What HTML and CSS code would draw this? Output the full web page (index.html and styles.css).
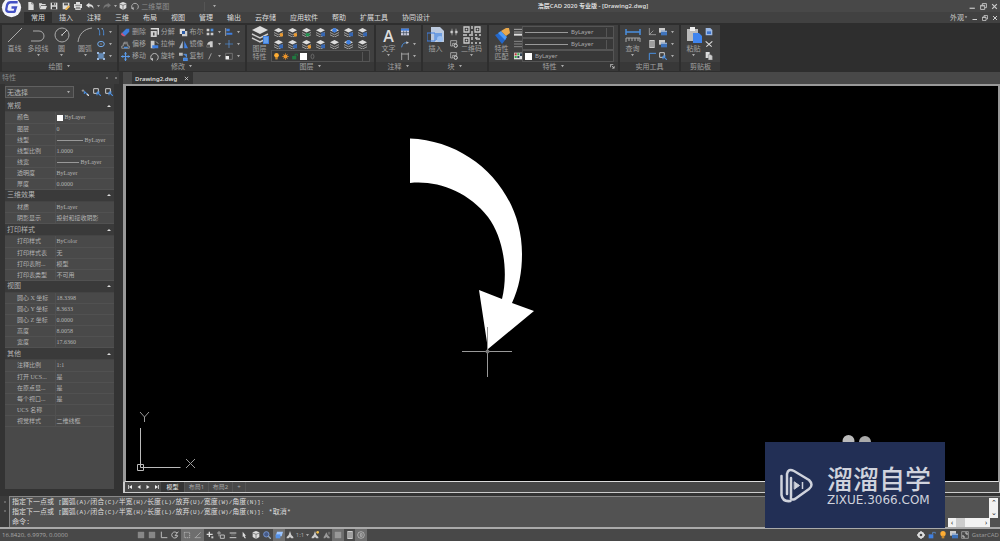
FILE: index.html
```html
<!DOCTYPE html>
<html lang="zh-CN">
<head>
<meta charset="utf-8">
<title>浩辰CAD 2020 专业版 - [Drawing2.dwg]</title>
<link rel="stylesheet" href="styles.css">
</head>
<body>
<svg class="sprite" aria-hidden="true">
  <symbol id="new" viewBox="0 0 12 12"><path d="M2 0h5l3 3v9H2z" fill="#ddd"/><path d="M7 0v3h3" fill="none" stroke="#666"/></symbol>
  <symbol id="open" viewBox="0 0 12 12"><path d="M0 2h4l1 1h5v2H3l-2 5z" fill="#ddd"/><path d="M3 6h9l-2 5H1z" fill="#ddd"/></symbol>
  <symbol id="save" viewBox="0 0 12 12"><path d="M1 1h10v10H1z" fill="#ddd"/><path d="M3 1h6v4H3zM3 7h6v4H3z" fill="#474747"/><path d="M6 2h2v2H6z" fill="#ddd"/></symbol>
  <symbol id="saveas" viewBox="0 0 12 12"><path d="M1 1h10v6L7 11H1z" fill="#ddd"/><path d="M3 2h6v3H3z" fill="#555"/><path d="M10 5l2 2-5 5H5v-2z" fill="#f0b64e"/></symbol>
  <symbol id="print" viewBox="0 0 12 12"><path d="M3 0h6v3h3v6h-2v3H2V9H0V3h3z" fill="#ddd"/><path d="M2 5h8M3 8h6M3 10h6" stroke="#555"/></symbol>
  <symbol id="undo" viewBox="0 0 12 12"><path d="M5 1L0 5l5 4V6.500c3 0 5 1 6 4 1-4-2-7-6-7z" fill="#ddd"/></symbol>
  <symbol id="redo" viewBox="0 0 12 12"><path d="M7 1l5 4-5 4V6.500c-3 0-5 1-6 4-1-4 2-7 6-7z" fill="#777"/></symbol>
  <symbol id="cube" viewBox="0 0 12 12"><path d="M6 0l5 2v7l-5 3-5-3V2z" fill="#ddd"/><path d="M1 3l5 2 5-2M6 5v7" fill="none" stroke="#555"/></symbol>
  <symbol id="orbit" viewBox="0 0 12 12"><path d="M3 11A5 5 0 1 1 9 11" fill="none" stroke="#bbb" stroke-width="1.300"/><path d="M0 9l4 3 0-4z" fill="#bbb"/></symbol>
  <symbol id="down" viewBox="0 0 6 4"><path d="M1 0h4L3 3z" fill="#aaa"/></symbol>
  <symbol id="min" viewBox="0 0 12 12"><path d="M1 9h9" stroke="#ccc" stroke-width="2"/></symbol>
  <symbol id="restore" viewBox="0 0 12 12"><path d="M1 4h7v7H1zM4 4V1h7v7H8M1 5h7" fill="none" stroke="#ccc" stroke-width="1.500"/></symbol>
  <symbol id="close" viewBox="0 0 12 12"><path d="M2 2l8 8M10 2l-8 8" stroke="#ccc" stroke-width="2"/></symbol>

  <symbol id="line" viewBox="0 0 16 16"><path d="M1 15L15 1" stroke="#aaa"/></symbol>
  <symbol id="pline" viewBox="0 0 16 16"><path d="M1 14h8a5 5 0 0 0 0-10H3" fill="none" stroke="#aaa"/></symbol>
  <symbol id="circle" viewBox="0 0 16 16"><circle cx="8" cy="8" r="7" fill="none" stroke="#aaa"/><path d="M8 8l5-5M7 8h2" stroke="#ccc"/></symbol>
  <symbol id="arc" viewBox="0 0 16 16"><path d="M1 15C2 7 7 2 15 1" fill="none" stroke="#aaa"/></symbol>
  <symbol id="spline" viewBox="0 0 12 12"><path d="M1 1c3 1 3 3 3 10M7 1c3 1 3 3 3 10" fill="none" stroke="#4a8ede" stroke-width="1.500"/><path d="M1 1h2M7 1h2" stroke="#ccc"/></symbol>
  <symbol id="ellipse" viewBox="0 0 12 12"><ellipse cx="6" cy="6" rx="5" ry="4" fill="none" stroke="#6fa8e8" stroke-width="1.500"/><path d="M5 6h2" stroke="#ddd"/></symbol>
  <symbol id="hatch" viewBox="0 0 12 12"><path d="M1 1h10v10H1z" fill="#567"/><path d="M3 3h6v6H3zM3 6h6M6 3v6" fill="none" stroke="#6fa8e8"/><path d="M0 0h3v3H0zM9 0h3v3H9zM0 9h3v3H0zM9 9h3v3H9z" fill="#9bb8dc"/></symbol>

  <symbol id="erase" viewBox="0 0 12 12"><path d="M7 1h4v4L5 11 1 7z" fill="#3f7fe0"/><path d="M1 6l5 5H3L0 9z" fill="#d25476"/></symbol>
  <symbol id="offset" viewBox="0 0 12 12"><path d="M1 11V8h2V5h6v3h2v3zM4 5V3h5" fill="none" stroke="#aaa"/><path d="M4 10h5" stroke="#4a8ede" stroke-width="2"/></symbol>
  <symbol id="move" viewBox="0 0 12 12"><path d="M6 0v12M0 6h12" stroke="#5b9bea" stroke-width="1.500"/><path d="M6 0l2 3H4zM6 12l2-3H4zM0 6l3-2v4zM12 6L9 4v4z" fill="#5b9bea"/></symbol>
  <symbol id="explode" viewBox="0 0 12 12"><path d="M1 4h8v8H1z" fill="#ccc"/><path d="M4 6h2v4H4z" fill="#444"/><path d="M1 1h10v8" fill="none" stroke="#ddd" stroke-width="2"/></symbol>
  <symbol id="stretch" viewBox="0 0 12 12"><path d="M1 1h5v10H1z" fill="#ccc"/><path d="M3 7h8v4H3z" fill="#3f7fe0"/><path d="M8 2l3 3" stroke="#ccc"/></symbol>
  <symbol id="bool" viewBox="0 0 12 12"><path d="M1 1h7v7H1z" fill="#ddd"/><path d="M4 4h7v7H4z" fill="#ccc"/><path d="M4 4h4v4H4z" fill="#2d5da8"/></symbol>
  <symbol id="mirror" viewBox="0 0 12 12"><path d="M5 1v10H0z" fill="#aeb9c7"/><path d="M7 1v10h5z" fill="#3f7fe0"/></symbol>
  <symbol id="copy2" viewBox="0 0 12 12"><path d="M0 1h5v4H0z" fill="#bbb"/><path d="M6 3h4v4M6 8h5v4H6z" fill="#3f7fe0" stroke="#5b9bea"/></symbol>
  <symbol id="array" viewBox="0 0 12 12"><path d="M1 1h4v4H1zM7 7h4v4H7zM1 7h4v4H1z" fill="#ccc"/><path d="M7 1h4v4H7z" fill="#4a8ede"/></symbol>
  <symbol id="fillet" viewBox="0 0 12 12"><path d="M1 11C1 5 4 2 8 2h2v9z" fill="#ccc"/><path d="M1 7h5v4H1z" fill="#555"/></symbol>
  <symbol id="slash" viewBox="0 0 12 12"><path d="M4 11l4-9" stroke="#ccc"/></symbol>
  <symbol id="align" viewBox="0 0 12 12"><path d="M1 0v12" stroke="#ccc"/><path d="M2 1h5v4H2zM2 7h9v3H2z" fill="#3f7fe0"/></symbol>
  <symbol id="trim" viewBox="0 0 12 12"><path d="M0 6h12" stroke="#4a8ede"/><path d="M6 0v12" stroke="#5b9bea"/></symbol>
  <symbol id="scale" viewBox="0 0 12 12"><path d="M1 2h10v9H1z" fill="none" stroke="#888"/><path d="M1 6h5v5H1z" fill="#eee"/></symbol>

  <symbol id="layers" viewBox="0 0 18 18"><path d="M9 0l8 4-8 4-8-4z" fill="#ddd"/><path d="M1 8l8 4 8-4M1 12l8 4 8-4" fill="none" stroke="#ccc" stroke-width="1.500"/><path d="M12 10h6v8h-6z" fill="#3f7fe0"/><path d="M13 12h4M13 14h4M13 16h4" stroke="#adf" stroke-width=".7"/></symbol>
  <symbol id="lay" viewBox="0 0 12 12"><path d="M6 0l6 3-6 3-6-3z" fill="#ddd"/><path d="M0 6l6 3 6-3M0 9l6 3 6-3" fill="none" stroke="#bbb"/></symbol>
  <symbol id="lay-o" viewBox="0 0 12 12"><use href="#lay"/><circle cx="10" cy="9" r="2.500" fill="#e99a32"/></symbol>
  <symbol id="lay-g" viewBox="0 0 12 12"><use href="#lay"/><path d="M5 7h5v4H5z" fill="#249653"/></symbol>
  <symbol id="lay-b" viewBox="0 0 12 12"><use href="#lay"/><path d="M7 6h5v5H7z" fill="#3567b5"/></symbol>
  <symbol id="lay-t" viewBox="0 0 12 12"><use href="#lay"/><circle cx="6" cy="3" r="3" fill="#3f7fe0"/></symbol>
  <symbol id="bulb" viewBox="0 0 12 12"><circle cx="6" cy="4" r="4" fill="#ffad33"/><path d="M4 7h4v4H4z" fill="#c9892f"/></symbol>
  <symbol id="sun" viewBox="0 0 12 12"><circle cx="6" cy="6" r="3.500" fill="#ffa52e"/><path d="M6 0v12M0 6h12M2 2l8 8M10 2l-8 8" stroke="#e08a28"/></symbol>
  <symbol id="lock" viewBox="0 0 12 12"><path d="M2 5h7v6H2z" fill="#207a40"/><path d="M7 5V2h4v3" fill="none" stroke="#207a40" stroke-width="1.500"/></symbol>
  <symbol id="swatch" viewBox="0 0 12 12"><path d="M0 0h12v12H0z" fill="#fff"/></symbol>
  <symbol id="zero" viewBox="0 0 12 12"><ellipse cx="6" cy="6" rx="2.500" ry="4" fill="none" stroke="#888"/></symbol>

  <symbol id="tbl" viewBox="0 0 12 12"><path d="M0 1h12v10H0z" fill="#ccd"/><path d="M0 1h12v3H0z" fill="#3f7fe0"/><path d="M0 7h12M4 4v7M8 4v7" stroke="#345"/></symbol>
  <symbol id="leader" viewBox="0 0 12 12"><path d="M1 11c1-6 4-7 8-7" fill="none" stroke="#4a8ede" stroke-width="1.500"/><path d="M8 2l4 2-4 2z" fill="#ccc"/></symbol>
  <symbol id="dim" viewBox="0 0 12 12"><path d="M1 1v11M11 1v11M1 3h10" fill="none" stroke="#bbb" stroke-width="1.200"/></symbol>
  <symbol id="insert" viewBox="0 0 18 18"><path d="M4 1h9l4 4v11H4z" fill="#bccadf"/><path d="M0 7h8v8H0z" fill="none" stroke="#3f7fe0"/><path d="M8 7h7v7H8z" fill="#6f9fe2"/><circle cx="13" cy="13" r="3" fill="#9cc1f3"/></symbol>
  <symbol id="qr" viewBox="0 0 18 18"><path d="M1 1h5v5H1zM12 1h5v5h-5zM1 12h5v5H1z" fill="none" stroke="#ccc" stroke-width="1.300"/><path d="M3 3h1v1H3zM14 3h1v1h-1zM3 14h1v1H3z" fill="#ccc" stroke="#ccc" stroke-width=".6"/><path d="M9 0v3M9 5v3M0 9h4M6 9h4M12 9h2M16 9h2M9 11v3M12 12h2v2M16 12v2M9 16v2M12 17h2M16 17h2" fill="none" stroke="#ccc" stroke-width="1.400"/></symbol>
  <symbol id="blk" viewBox="0 0 12 12"><path d="M3 1v10M9 1v10M0 6h5M7 6h5" stroke="#bbb"/><path d="M1 4h3v4H1zM8 4h3v4H8z" fill="#ccc"/></symbol>
  <symbol id="blk2" viewBox="0 0 12 12"><path d="M1 1h9v4H4v4H1z" fill="none" stroke="#bbb" stroke-width="1.200"/><circle cx="8.500" cy="8.500" r="2.500" fill="none" stroke="#ddd" stroke-width="1.500"/></symbol>
  <symbol id="brush" viewBox="0 0 18 18"><path d="M2 9l4-2 7 6-4 5z" fill="#2467c9"/><path d="M5 7l3-2 6 6-2 3z" fill="#4c99f5"/><path d="M8 5l5-3 3 0 1 5-4 3z" fill="#e9a84c"/></symbol>
  <symbol id="thick" viewBox="0 0 12 12"><path d="M0 2h12M0 6h12" stroke="#ddd"/><path d="M0 10h12" stroke="#ddd" stroke-width="3"/></symbol>
  <symbol id="thin" viewBox="0 0 12 12"><path d="M0 2h12M0 6h12M0 10h12" stroke="#aaa"/></symbol>
  <symbol id="colors" viewBox="0 0 12 12"><path d="M0 1h12v10H0z" fill="#ddd"/><path d="M1 2h3v3H1z" fill="#b33"/><path d="M5 2h3v3H5zM1 6h3v3H1z" fill="#3a4"/><path d="M9 2h3v4H9zM5 6h3v3H5z" fill="#345"/></symbol>
  <symbol id="measure" viewBox="0 0 18 18"><path d="M2 3v6M16 3v6M2 6h14" stroke="#4a8ede" stroke-width="1.500"/><path d="M2 16v-4h14v4M5 12v3M8 12v3M11 12v3M14 12v3" fill="none" stroke="#aaa"/></symbol>
  <symbol id="ucs" viewBox="0 0 12 12"><path d="M2 0v10h10M2 10l6-6" fill="none" stroke="#bbb"/></symbol>
  <symbol id="calc" viewBox="0 0 12 12"><path d="M2 0h8v12H2z" fill="#ccc"/><path d="M3 3h6M3 6h6M3 9h6" stroke="#444"/></symbol>
  <symbol id="corner" viewBox="0 0 12 12"><path d="M2 12V2h10" fill="none" stroke="#4a8ede" stroke-width="1.500"/></symbol>
  <symbol id="win" viewBox="0 0 12 12"><path d="M0 0h9v7H0z" fill="#ccc"/><path d="M3 4h9v7H3z" fill="#3f74bd"/><path d="M3 5h9" stroke="#ddd"/></symbol>
  <symbol id="pick" viewBox="0 0 12 12"><path d="M1 1h7v7H1z" fill="none" stroke="#ccc" stroke-width="1.500"/><path d="M6 6l6 6M6 6v5M6 6h4" fill="none" stroke="#4a8ede" stroke-width="1.600"/></symbol>
  <symbol id="qpick" viewBox="0 0 12 12"><path d="M1 4h4M3 2v4" stroke="#bbb"/><path d="M5 5l5 5M5 5v4" fill="none" stroke="#4a8ede" stroke-width="1.600"/><path d="M9 9l3 3" stroke="#ddd" stroke-width="2"/></symbol>
  <symbol id="paste" viewBox="0 0 18 18"><path d="M2 3h11v12H2z" fill="#bbb"/><path d="M5 1h5v4H5z" fill="#eee"/><path d="M8 7h6l3 3v7H8z" fill="#3f84ee"/></symbol>
  <symbol id="cut" viewBox="0 0 12 12"><path d="M1 2l9 8M11 2l-9 8" stroke="#ddd" stroke-width="1.600"/></symbol>
  <symbol id="copy" viewBox="0 0 12 12"><path d="M1 0h6v9H1z" fill="#ddd"/><path d="M5 4h4l2 2v6H5z" fill="#ccc" stroke="#777" stroke-width=".7"/></symbol>
  <symbol id="pagelink" viewBox="0 0 12 12"><path d="M1 0h7l3 3v8H1z" fill="#9db9e4"/><path d="M3 5h6v4H3z" fill="#3f74cc"/></symbol>
  <symbol id="launch" viewBox="0 0 12 12"><path d="M1 8V1h7M4 4l6 6M10 5v5H5" fill="none" stroke="#ccc" stroke-width="1.800"/></symbol>

  <symbol id="grid" viewBox="0 0 12 12"><path d="M1 3h10M1 6h10M1 9h10M3 1v10M6 1v10M9 1v10" stroke="#bbb"/></symbol>
  <symbol id="ortho" viewBox="0 0 12 12"><path d="M2 1v9h9" fill="none" stroke="#bbb" stroke-width="1.500"/></symbol>
  <symbol id="polar" viewBox="0 0 12 12"><path d="M9 3A4.500 4.500 0 1 0 10 7H6l5-6" fill="none" stroke="#ccc" stroke-width="1.300"/></symbol>
  <symbol id="osnap" viewBox="0 0 12 12"><path d="M2 2h8v8H2z" fill="none" stroke="#ccc" stroke-dasharray="2 1"/></symbol>
  <symbol id="otrack" viewBox="0 0 12 12"><path d="M2 10L10 2M1 10h9" fill="none" stroke="#bbb"/></symbol>
  <symbol id="plus" viewBox="0 0 12 12"><path d="M5 1v8M1 5h9" stroke="#ddd" stroke-width="2"/><path d="M8 8h3v3H8z" fill="#ccc"/></symbol>
  <symbol id="dyn" viewBox="0 0 12 12"><path d="M3 0v8M0 3h6" stroke="#ccc"/><path d="M5 6h6v5H5z" fill="none" stroke="#bbb" stroke-width="1.500"/></symbol>
  <symbol id="lwt" viewBox="0 0 12 12"><path d="M1 3h10M1 10h10" stroke="#ccc" stroke-width="1.500"/><path d="M3 6h7" stroke="#888"/></symbol>
  <symbol id="cursor" viewBox="0 0 12 12"><path d="M4 1l5 6H7l2 4H7L5 8 4 9z" fill="#ddd"/></symbol>
  <symbol id="lens" viewBox="0 0 12 12"><circle cx="5" cy="5" r="4" fill="#465a87" stroke="#7595cf" stroke-width="1.500"/><path d="M8 8l4 4" stroke="#9ab" stroke-width="2"/></symbol>
  <symbol id="blue" viewBox="0 0 12 12"><path d="M3 1h9l-2 7H1z" fill="#9cc5ff"/><path d="M1 5h7v6H1z" fill="#5592e8"/></symbol>
  <symbol id="ann" viewBox="0 0 12 12"><path d="M6 0l2 6 3 3v2H8L6 9l-2 2H1V9l3-3z" fill="#ccc"/></symbol>
  <symbol id="annstar" viewBox="0 0 12 12"><use href="#ann"/><circle cx="10" cy="2" r="2" fill="#f3c04d"/></symbol>
  <symbol id="annoff" viewBox="0 0 12 12"><path d="M5 2l2 4 3 3v2H7L5 9l-2 2H1V9l2-3z" fill="#999"/><path d="M9 1v5M7 3h4" stroke="#888"/></symbol>
  <symbol id="gear" viewBox="0 0 12 12"><circle cx="6" cy="6" r="3.500" fill="none" stroke="#ddd" stroke-width="3"/><path d="M6 0v3M6 9v3M0 6h3M9 6h3" stroke="#ddd" stroke-width="2"/></symbol>
  <symbol id="unlock" viewBox="0 0 12 12"><path d="M1 5h7v6H1z" fill="#3f7fe0"/><path d="M7 5V2h4v2" fill="none" stroke="#5582bd" stroke-width="1.500"/></symbol>
  <symbol id="full" viewBox="0 0 12 12"><path d="M1 1h10v10H1z" fill="none" stroke="#bbb"/><path d="M3 6v3h3M9 6V3H6" fill="none" stroke="#ccc" stroke-width="1.500"/></symbol>
  <symbol id="round" viewBox="0 0 12 12"><circle cx="6" cy="6" r="5" fill="none" stroke="#ccc"/><path d="M8 4H5v4h3M6 6h3" fill="none" stroke="#ccc"/></symbol>
  <symbol id="first" viewBox="0 0 12 12"><path d="M10 2v8L4 6z" fill="#eee"/><path d="M3 2v8" stroke="#eee" stroke-width="1.500"/></symbol>
  <symbol id="prev" viewBox="0 0 12 12"><path d="M9 2v8L3 6z" fill="#eee"/></symbol>
  <symbol id="next" viewBox="0 0 12 12"><path d="M3 2v8l6-4z" fill="#eee"/></symbol>
  <symbol id="last" viewBox="0 0 12 12"><path d="M2 2v8l6-4z" fill="#eee"/><path d="M9 2v8" stroke="#eee" stroke-width="1.500"/></symbol>
</svg>

<div class="app">
  <header class="titlebar">
    <div class="quick">
      <button aria-label="新建"><svg><use href="#new"/></svg></button>
      <button aria-label="打开"><svg><use href="#open"/></svg></button>
      <button aria-label="保存"><svg><use href="#save"/></svg></button>
      <button aria-label="另存为"><svg><use href="#saveas"/></svg></button>
      <button aria-label="打印"><svg><use href="#print"/></svg></button>
      <button aria-label="放弃"><svg><use href="#undo"/></svg></button>
      <svg class="dn"><use href="#down"/></svg>
      <button aria-label="重做"><svg><use href="#redo"/></svg></button>
      <svg class="dn"><use href="#down"/></svg>
      <button aria-label="视图"><svg><use href="#cube"/></svg></button>
      <button aria-label="动态观察"><svg><use href="#orbit"/></svg></button>
      <select class="workspace" aria-label="工作空间"><option>二维草图</option></select>
      <svg class="dn"><use href="#down"/></svg>
    </div>
    <h1>浩辰CAD 2020 专业版 - [Drawing2.dwg]</h1>
    <div class="winbtns">
      <button aria-label="最小化"><svg><use href="#min"/></svg></button>
      <button aria-label="还原"><svg><use href="#restore"/></svg></button>
      <button aria-label="关闭"><svg><use href="#close"/></svg></button>
    </div>
    <svg class="logo" viewBox="0 0 24 24" role="img" aria-label="GstarCAD"><circle cx="12" cy="12" r="11" fill="#f4f5fb"/><path d="M19 6h-8q-3 0-4 3l-1 5q0 3 3 3h5q2 0 2-2l1-3h-5" fill="none" stroke="#4350c4" stroke-width="2.600"/></svg>
  </header>

  <nav class="menubar">
    <button class="on">常用</button><button>插入</button><button>注释</button><button>三维</button><button>布局</button><button>视图</button><button>管理</button><button>输出</button><button>云存储</button><button>应用软件</button><button>帮助</button><button>扩展工具</button><button>协同设计</button>
    <div class="docbtns">
      <button>外观<svg class="dn"><use href="#down"/></svg></button>
      <button aria-label="最小化文档"><svg><use href="#min"/></svg></button>
      <button aria-label="还原文档"><svg><use href="#restore"/></svg></button>
      <button aria-label="关闭文档"><svg><use href="#close"/></svg></button>
    </div>
  </nav>

  <div class="ribbon">
    <section class="panel draw">
      <div class="tools">
        <button class="big"><svg><use href="#line"/></svg>直线</button>
        <button class="big"><svg><use href="#pline"/></svg>多段线<svg class="dn"><use href="#down"/></svg></button>
        <button class="big"><svg><use href="#circle"/></svg>圆<svg class="dn"><use href="#down"/></svg></button>
        <button class="big"><svg><use href="#arc"/></svg>圆弧<svg class="dn"><use href="#down"/></svg></button>
        <div class="col drops">
          <button aria-label="样条曲线"><svg><use href="#spline"/></svg><svg class="dn"><use href="#down"/></svg></button>
          <button aria-label="椭圆"><svg><use href="#ellipse"/></svg><svg class="dn"><use href="#down"/></svg></button>
          <button aria-label="填充"><svg><use href="#hatch"/></svg><svg class="dn"><use href="#down"/></svg></button>
        </div>
      </div>
      <h2>绘图<svg class="dn"><use href="#down"/></svg></h2>
    </section>
    <section class="panel modify">
      <div class="tools">
        <div class="col labelled">
          <button><svg><use href="#erase"/></svg>删除</button>
          <button><svg><use href="#offset"/></svg>偏移</button>
          <button><svg><use href="#move"/></svg>移动</button>
        </div>
        <div class="col labelled">
          <button><svg><use href="#explode"/></svg>分解</button>
          <button><svg><use href="#stretch"/></svg>拉伸</button>
          <button><svg><use href="#orbit"/></svg>旋转</button>
        </div>
        <div class="col labelled">
          <button><svg><use href="#bool"/></svg>布尔</button>
          <button><svg><use href="#mirror"/></svg>镜像</button>
          <button><svg><use href="#copy2"/></svg>复制</button>
        </div>
        <div class="col drops">
          <button aria-label="阵列"><svg><use href="#array"/></svg><svg class="dn"><use href="#down"/></svg></button>
          <button aria-label="圆角"><svg><use href="#fillet"/></svg><svg class="dn"><use href="#down"/></svg></button>
          <button aria-label="打断"><svg><use href="#slash"/></svg><svg class="dn"><use href="#down"/></svg></button>
        </div>
        <div class="col drops">
          <button aria-label="对齐"><svg><use href="#align"/></svg><svg class="dn"><use href="#down"/></svg></button>
          <button aria-label="修剪"><svg><use href="#trim"/></svg><svg class="dn"><use href="#down"/></svg></button>
          <button aria-label="缩放"><svg><use href="#scale"/></svg><svg class="dn"><use href="#down"/></svg></button>
        </div>
      </div>
      <h2>修改<svg class="dn"><use href="#down"/></svg></h2>
    </section>
    <section class="panel layer">
      <div class="tools">
        <button class="big"><svg><use href="#layers"/></svg>图层<br>特性</button>
        <div class="layergrid">
          <button aria-label="关闭图层"><svg><use href="#lay-o"/></svg></button><button aria-label="冻结图层"><svg><use href="#lay-o"/></svg></button><button aria-label="锁定图层"><svg><use href="#lay-g"/></svg></button><button aria-label="置为当前"><svg><use href="#lay-b"/></svg></button><button aria-label="隔离图层"><svg><use href="#lay-t"/></svg></button><button aria-label="图层漫游"><svg><use href="#lay-b"/></svg></button><button aria-label="图层匹配"><svg><use href="#lay-b"/></svg></button>
          <button aria-label="打开图层"><svg><use href="#lay-b"/></svg></button><button aria-label="解冻图层"><svg><use href="#lay-b"/></svg></button><button aria-label="解锁图层"><svg><use href="#lay-o"/></svg></button><button aria-label="上一图层"><svg><use href="#lay-b"/></svg></button><button aria-label="合并图层"><svg><use href="#lay"/></svg></button><button aria-label="删除图层"><svg><use href="#lay-t"/></svg></button><button aria-label="图层状态"><svg><use href="#lay"/></svg></button>
          <button class="combo" aria-label="当前图层 0"><svg><use href="#bulb"/></svg><svg><use href="#sun"/></svg><svg><use href="#lock"/></svg><svg><use href="#swatch"/></svg><svg><use href="#zero"/></svg><span class="grip"></span></button>
        </div>
      </div>
      <h2>图层<svg class="dn"><use href="#down"/></svg></h2>
    </section>
    <section class="panel annot">
      <div class="tools">
        <button class="big"><span class="letter">A</span>文字<svg class="dn"><use href="#down"/></svg></button>
        <div class="col drops">
          <button aria-label="表格"><svg><use href="#tbl"/></svg></button>
          <button aria-label="引线"><svg><use href="#leader"/></svg><svg class="dn"><use href="#down"/></svg></button>
          <button aria-label="标注"><svg><use href="#dim"/></svg><svg class="dn"><use href="#down"/></svg></button>
        </div>
      </div>
      <h2>注释<svg class="dn"><use href="#down"/></svg></h2>
    </section>
    <section class="panel block">
      <div class="tools">
        <button class="big"><svg><use href="#insert"/></svg>插入</button>
        <div class="col">
          <button aria-label="创建块"><svg><use href="#blk"/></svg></button>
          <button aria-label="编辑块"><svg><use href="#blk2"/></svg></button>
          <button aria-label="属性"><svg><use href="#blk2"/></svg></button>
        </div>
        <button class="big"><svg><use href="#qr"/></svg>二维码<svg class="dn"><use href="#down"/></svg></button>
      </div>
      <h2>块<svg class="dn"><use href="#down"/></svg></h2>
    </section>
    <section class="panel props">
      <div class="tools">
        <button class="big"><svg><use href="#brush"/></svg>特性<br>匹配</button>
        <div class="col">
          <svg><use href="#thick"/></svg><svg><use href="#thin"/></svg><svg><use href="#colors"/></svg>
        </div>
        <div class="col combos">
          <button class="combo"><span class="rule"></span>ByLayer<span class="grip"></span></button>
          <button class="combo"><span class="rule"></span>ByLayer<span class="grip"></span></button>
          <button class="combo"><svg><use href="#swatch"/></svg>ByLayer</button>
        </div>
      </div>
      <h2>特性<svg class="dn"><use href="#down"/></svg><svg class="launch"><use href="#launch"/></svg></h2>
    </section>
    <section class="panel util">
      <div class="tools">
        <button class="big"><svg><use href="#measure"/></svg>查询<svg class="dn"><use href="#down"/></svg></button>
        <div class="col">
          <button aria-label="坐标"><svg><use href="#ucs"/></svg></button>
          <button aria-label="计算器"><svg><use href="#calc"/></svg></button>
          <button aria-label="点样式"><svg><use href="#corner"/></svg></button>
        </div>
        <div class="col drops">
          <button aria-label="窗口"><svg><use href="#win"/></svg><svg class="dn"><use href="#down"/></svg></button>
          <button aria-label="绘图次序"><svg><use href="#win"/></svg><svg class="dn"><use href="#down"/></svg></button>
          <button aria-label="选择"><svg><use href="#pick"/></svg><svg class="dn"><use href="#down"/></svg></button>
        </div>
      </div>
      <h2>实用工具</h2>
    </section>
    <section class="panel clip">
      <div class="tools">
        <button class="big"><svg><use href="#paste"/></svg>粘贴<svg class="dn"><use href="#down"/></svg></button>
        <div class="col">
          <button aria-label="复制链接"><svg><use href="#pagelink"/></svg></button>
          <button aria-label="剪切"><svg><use href="#cut"/></svg></button>
          <button aria-label="复制"><svg><use href="#copy"/></svg></button>
        </div>
      </div>
      <h2>剪贴板</h2>
    </section>
  </div>

  <main class="work">
    <aside class="palette">
      <header>特性<span class="pins"><i></i><i></i></span></header>
      <div class="sheet">
        <div class="pickrow">
          <div class="selwrap"><select aria-label="选择对象"><option>无选择</option></select><svg class="dn"><use href="#down"/></svg></div>
          <button aria-label="快速选择"><svg><use href="#qpick"/></svg></button>
          <button aria-label="选择对象按钮"><svg><use href="#pick"/></svg></button>
          <button aria-label="切换选择"><svg><use href="#pick"/></svg></button>
        </div>
        <button class="group">常规</button>
        <table>
          <tr><th>颜色</th><td><span class="chip"></span>ByLayer</td></tr>
          <tr><th>图层</th><td>0</td></tr>
          <tr><th>线型</th><td><span class="rule long"></span>ByLayer</td></tr>
          <tr><th>线型比例</th><td>1.0000</td></tr>
          <tr><th>线宽</th><td><span class="rule"></span>ByLayer</td></tr>
          <tr><th>透明度</th><td>ByLayer</td></tr>
          <tr><th>厚度</th><td>0.0000</td></tr>
        </table>
        <button class="group">三维效果</button>
        <table>
          <tr><th>材质</th><td>ByLayer</td></tr>
          <tr><th>阴影显示</th><td>投射和接收阴影</td></tr>
        </table>
        <button class="group">打印样式</button>
        <table>
          <tr><th>打印样式</th><td>ByColor</td></tr>
          <tr><th>打印样式表</th><td>无</td></tr>
          <tr><th>打印表附...</th><td>模型</td></tr>
          <tr><th>打印表类型</th><td>不可用</td></tr>
        </table>
        <button class="group">视图</button>
        <table>
          <tr><th>圆心 X 坐标</th><td>18.3398</td></tr>
          <tr><th>圆心 Y 坐标</th><td>8.3633</td></tr>
          <tr><th>圆心 Z 坐标</th><td>0.0000</td></tr>
          <tr><th>高度</th><td>8.0058</td></tr>
          <tr><th>宽度</th><td>17.6360</td></tr>
        </table>
        <button class="group">其他</button>
        <table>
          <tr><th>注释比例</th><td>1:1</td></tr>
          <tr><th>打开 UCS...</th><td>是</td></tr>
          <tr><th>在原点显...</th><td>是</td></tr>
          <tr><th>每个视口...</th><td>是</td></tr>
          <tr><th>UCS 名称</th><td></td></tr>
          <tr><th>视觉样式</th><td>二维线框</td></tr>
        </table>
      </div>
    </aside>
    <section class="docs">
      <div class="filetabs"><button>Drawing2.dwg</button><button class="x" aria-label="关闭图纸"><svg><use href="#close"/></svg></button></div>
      <div class="canvas">
        <svg>
          <g transform="translate(-126 -86)">
            <path d="M410 138.500C472 141 522 191 522 254C522 272 519 288 512 303L534 311 488 349 479 290 502 299C508 275 505 240 488 217C468 191 436 180 410 183z" fill="#fff"/>
            <path d="M462 351.500h50M487.500 327v50" stroke="#999"/>
            <circle cx="487.500" cy="351.500" r="2" fill="#777"/>
            <path d="M140.500 428v39.500h40M137.500 464.500h6v6h-6z" fill="none" stroke="#bbb"/>
            <path d="M140 412l4.500 5 4.500-5M144.500 417v5M186 459l9 9M195 459l-9 9" fill="none" stroke="#999"/>
            <circle cx="848.500" cy="441" r="6" fill="#bbb"/><circle cx="865" cy="442" r="6" fill="#aaa"/>
          </g>
        </svg>
      </div>
      <div class="layouts">
        <button aria-label="首个"><svg><use href="#first"/></svg></button><button aria-label="上一个"><svg><use href="#prev"/></svg></button><button aria-label="下一个"><svg><use href="#next"/></svg></button><button aria-label="末个"><svg><use href="#last"/></svg></button>
        <button class="tab on">模型</button><button class="tab">布局1</button><button class="tab">布局2</button><button class="tab add">+</button>
      </div>
    </section>
  </main>

  <section class="command">
    <div class="handle"><i></i><i></i></div>
    <div class="log">
      <p>指定下一点或 <kbd>[</kbd>圆弧<kbd>(A)/</kbd>闭合<kbd>(C)/</kbd>半宽<kbd>(H)/</kbd>长度<kbd>(L)/</kbd>放弃<kbd>(U)/</kbd>宽度<kbd>(W)/</kbd>角度<kbd>(N)]:</kbd></p>
      <p>指定下一点或 <kbd>[</kbd>圆弧<kbd>(A)/</kbd>闭合<kbd>(C)/</kbd>半宽<kbd>(H)/</kbd>长度<kbd>(L)/</kbd>放弃<kbd>(U)/</kbd>宽度<kbd>(W)/</kbd>角度<kbd>(N)]:</kbd> *取消*</p>
      <label>命令:<input type="text"></label>
    </div>
    <div class="scrolls">
      <div class="vscroll"><button aria-label="向上">⌃</button><button aria-label="向下">⌄</button></div>
      <div class="hscroll"><button aria-label="向左">‹</button><i></i><button aria-label="向右">›</button></div>
    </div>
  </section>

  <footer class="status">
    <output>16.8420, 6.9979, 0.0000</output>
    <div class="modes">
      <button aria-label="捕捉"><svg><use href="#grid"/></svg></button>
      <button aria-label="栅格"><svg><use href="#grid"/></svg></button>
      <button aria-label="正交"><svg><use href="#ortho"/></svg></button>
      <button aria-label="极轴"><svg><use href="#polar"/></svg></button>
      <button class="on" aria-label="对象捕捉"><svg><use href="#osnap"/></svg></button>
      <button class="on" aria-label="对象追踪"><svg><use href="#otrack"/></svg></button>
      <button aria-label="动态 UCS"><svg><use href="#plus"/></svg></button>
      <button aria-label="动态输入"><svg><use href="#dyn"/></svg></button>
      <button aria-label="线宽"><svg><use href="#lwt"/></svg></button>
      <button aria-label="循环选择"><svg><use href="#cursor"/></svg></button>
      <button aria-label="三维"><svg><use href="#cube"/></svg></button>
      <button aria-label="缩放"><svg><use href="#lens"/></svg></button>
      <button class="on" aria-label="硬件加速"><svg><use href="#blue"/></svg></button>
      <button aria-label="注释比例"><svg><use href="#ann"/></svg></button>
      <button class="scale">1:1<svg class="dn"><use href="#down"/></svg></button>
      <button aria-label="注释可见性"><svg><use href="#annstar"/></svg></button>
      <button aria-label="自动缩放"><svg><use href="#annoff"/></svg></button>
      <button class="on" aria-label="图案"><svg><use href="#grid"/></svg></button>
      <button aria-label="快捷特性"><svg><use href="#calc"/></svg></button>
      <button class="on" aria-label="云"><svg><use href="#round"/></svg></button>
    </div>
    <div class="tray">
      <button aria-label="设置"><svg><use href="#gear"/></svg></button>
      <button aria-label="锁定"><svg><use href="#unlock"/></svg></button>
      <button aria-label="隔离"><svg><use href="#bulb"/></svg></button>
      <button aria-label="窗口"><svg><use href="#win"/></svg></button>
      <button aria-label="全屏"><svg><use href="#full"/></svg></button>
      <span>GstarCAD</span>
    </div>
  </footer>

  <div class="badge">
    <svg viewBox="0 0 36 36" fill="none" stroke="#d0d3dd" stroke-width="2.500" stroke-linecap="round" stroke-linejoin="round"><path d="M2.500 9v19q1 7 9 6"/><path d="M8 27V7q1-6 7-3l15 9q5 5 0 9L16 32q-5 2-4-3V11"/><path d="M15.500 15l5 3.500-5 3.500z" fill="#d0d3dd" stroke-width="1"/><path d="M23.500 15v7" stroke-width="1.500" stroke-linecap="butt"/></svg>
    <div><strong>溜溜自学</strong><span>ZIXUE.3066.COM</span></div>
  </div>
</div>
</body>
</html>
```
FILE: styles.css
```css
* { box-sizing: border-box; }
body { margin: 0; background: #333; color: #ccc; font: 7px/10px "Noto Sans", "Noto Sans CJK SC", sans-serif; }
button, select, input { margin: 0; padding: 0; border: 0; background: none; color: inherit; font: inherit; appearance: none; white-space: nowrap; }
button { display: flex; align-items: center; justify-content: center; }
svg { display: block; flex: none; width: 8px; height: 8px; }
h1, h2, p { margin: 0; font: inherit; }
.sprite { position: absolute; width: 0; height: 0; }
svg.dn { width: 5px; height: 3px; }
.app { position: relative; display: flex; flex-direction: column; height: 100vh; overflow: hidden; }

.titlebar { position: relative; display: flex; align-items: center; height: 12px; background: #484848; }
.logo { position: absolute; left: 1px; top: -3px; width: 21px; height: 21px; z-index: 2; }
.quick { display: flex; align-items: center; width: 217px; height: 9px; padding-left: 25px; }
.quick button { width: 12px; }
.workspace { width: 65px; height: 9px; margin-right: 7px; padding-left: 0; color: #8d8d8d; border-right: 1px solid #555; }
.titlebar h1 { flex: 1; text-align: center; font-weight: 600; color: #ddd; font-size: 6px; }
.winbtns { display: flex; gap: 4px; padding-right: 2px; }
.winbtns svg { width: 7px; height: 7px; }

.menubar { display: flex; height: 11px; padding-left: 24px; background: #414141; }
.menubar > button { padding: 0 7px; color: #ddd; }
.menubar > .on { background: #2f2f2f; }
.docbtns { display: flex; gap: 4px; margin-left: auto; padding-right: 2px; }
.docbtns svg { width: 6px; height: 6px; }
.docbtns svg.dn { width: 4px; height: 3px; }

.ribbon { display: flex; gap: 2px; height: 49px; padding: 2px 2px 1px; background: #2e2e2e; }
.panel { display: flex; flex-direction: column; background: #404040; color: #a2a2a2; }
.tools { display: flex; flex: 1; padding: 1px 4px 0 1px; justify-content: space-between; }
.panel h2 { position: relative; display: flex; align-items: center; justify-content: center; gap: 3px; height: 9px; background: #383838; }
.draw { width: 115px; }
.modify { width: 126px; }
.layer { width: 127px; }
.annot { width: 45px; }
.block { width: 64px; }
.props { width: 129px; }
.util { width: 59px; }
.clip { width: 39px; }
.clip .tools { padding-right: 7px; }
.big { flex-direction: column; justify-content: flex-start; width: 23px; line-height: 8px; }
.big > svg:first-child { width: 18px; height: 18px; margin-bottom: 1px; }
.draw .big > svg:first-child { width: 16px; height: 16px; margin: 1px 0 2px; }
.big .dn { margin-top: 1px; }
.letter { height: 19px; color: #ddd; font: 600 16px/20px "Open Sans", sans-serif; }
.col { display: grid; grid-template-rows: repeat(3, 1fr); align-items: center; }
.col button { justify-content: flex-start; gap: 3px; }
.labelled button { gap: 2px; padding-left: 1px; }
.labelled svg { width: 9px; height: 9px; }
.layergrid { display: grid; flex: 1; grid-template-columns: repeat(7, 1fr); grid-template-rows: repeat(3, 1fr); }
.layergrid button:not(.combo) svg { width: 9px; height: 9px; }
.combo { background: #383838; border: 1px solid #555; color: #aaa; font-size: 6px; line-height: 8px; }
.layergrid .combo { grid-column: 1 / -1; justify-content: flex-start; gap: 2px; padding-left: 1px; }
.combo svg { width: 7px; height: 7px; }
.grip { width: 7px; height: 9px; margin-left: auto; border-left: 1px solid #555; }
.combos { width: 92px; }
.combos .combo { height: 12px; padding-left: 2px; }
.props .rule { width: 43px; }
.rule { display: inline-block; height: 1px; background: #999; vertical-align: middle; }
.panel .launch { position: absolute; right: 3px; width: 5px; height: 5px; }

.work { display: flex; flex: 1; min-height: 0; }
.palette { display: flex; flex-direction: column; width: 123px; padding: 0 4px 7px 0; background: #333; color: #b4b4b4; }
.palette header { display: flex; height: 12px; padding-left: 2px; align-items: center; color: #888; background: #3b3b3b; }
.pins { display: flex; gap: 7px; margin-left: auto; padding-right: 2px; }
.pins i { width: 2px; height: 2px; background: #777; }
.sheet { flex: 1; margin: 0 5px; background: #494949; font: 6px/10px "Liberation Serif", "Noto Sans CJK SC", serif; }
.pickrow { display: flex; align-items: center; gap: 4px; height: 16px; background: #3a3a3a; }
.selwrap { display: flex; align-items: center; width: 69px; height: 12px; margin-right: 3px; padding-right: 2px; border: 1px solid #606060; background: #444; }
.selwrap select { flex: 1; padding-left: 1px; font: 7px/10px "Noto Sans CJK SC", sans-serif; }
.group { width: 100%; height: 12px; padding: 0 3px 0 2px; justify-content: space-between; background: #3a3a3a; border-bottom: 1px solid #444; font-size: 7px; }
.group::after { content: ""; border: 2px solid transparent; border-top: 0; border-bottom-color: #ddd; }
.sheet table { width: 100%; border-collapse: collapse; table-layout: fixed; }
.sheet th, .sheet td { height: 11px; padding: 0; font-weight: normal; text-align: left; white-space: nowrap; border-bottom: 1px solid #515151; }
.sheet th { width: 50px; padding-left: 12px; border-right: 1px solid #515151; }
.sheet td { padding-left: 1px; }
.chip { display: inline-block; width: 6px; height: 6px; margin-right: 2px; background: #fff; vertical-align: middle; }
.sheet .rule { width: 22px; margin-right: 2px; }
.sheet .long { width: 26px; }

.docs { display: flex; flex: 1; flex-direction: column; min-width: 0; background: #484848; margin-bottom: 3px; }
.filetabs { display: flex; height: 12px; padding-left: 9px; align-items: stretch; }
.filetabs button { padding: 1px 3px 0; background: #333; color: #ddd; font-size: 6px; font-weight: 600; }
.filetabs .x { padding: 0 4px; }
.filetabs .x svg { width: 5px; height: 5px; }
.canvas { flex: 1; min-height: 0; border: solid #999; border-width: 2px 2px 1px 3px; border-bottom-color: #ddd; background: #000; }
.canvas svg { width: 100%; height: 100%; }
.layouts { display: flex; height: 11px; border: solid #ccc; border-width: 0 1px 1px 2px; }
.layouts button { width: 9px; color: #eee; }
.layouts button svg { width: 6px; height: 6px; }
.layouts .tab { width: 24px; font-size: 6px; color: #aaa; border-right: 1px solid #555; }
.layouts .on { background: #353535; color: #eee; }
.layouts .add { width: 13px; }

.command { display: flex; height: 33px; border-bottom: 2px solid #aaa; background: #3b3b3b; }
.handle { display: flex; flex-direction: column; align-items: center; gap: 7px; width: 9px; padding-top: 5px; }
.handle i { width: 2px; height: 2px; background: #666; }
.log { flex: 1; padding: 1px 0 0 2px; border: solid #888; border-width: 1px 0 0 1px; background: #525252; color: #ddd; font: 7px/9px "Liberation Mono", "Noto Sans CJK SC", monospace; }
.log p { height: 10px; white-space: nowrap; }
.log kbd { font: 6px/9px "Liberation Mono", monospace; }
.log label { display: flex; height: 9px; }
.log input { flex: 1; }
.scrolls { display: flex; flex-direction: column; width: 52px; padding: 1px 2px 0 0; background: #525252; color: #222; border-top: 1px solid #888; }
.vscroll { align-self: flex-end; width: 9px; background: #f2f2f2; }
.vscroll button { width: 9px; height: 10px; }
.hscroll { display: flex; width: 42px; height: 9px; background: #f2f2f2; }
.hscroll button { width: 8px; }
.hscroll i { width: 9px; background: #ccc; }
.hscroll button:last-child { margin-left: auto; }

.status { display: flex; align-items: center; height: 12px; background: #484848; color: #aaa; font-size: 6px; }
.status output { width: 135px; padding-left: 2px; line-height: 8px; font-family: "Open Sans", sans-serif; }
.modes { display: flex; height: 12px; }
.modes button { width: 12px; margin-right: -1px; }
.modes button:nth-child(even) { margin-right: 0; }
.modes .on { background: #6e6e6e; }
.modes .scale { width: 14px; gap: 1px; }
.tray { display: flex; align-items: center; gap: 3px; margin-left: auto; padding-right: 1px; color: #999; line-height: 8px; }

.badge { position: absolute; right: 55px; bottom: 13px; display: flex; align-items: center; gap: 12px; width: 180px; height: 86px; padding-left: 14px; background: #222f55; color: #d0d3dd; }
.badge svg { width: 36px; height: 36px; }
.badge div { display: flex; flex-direction: column; gap: 3px; }
.badge strong { font: 500 26px/26px "Noto Sans CJK SC", sans-serif; }
.badge span { font: 12px/12px "DejaVu Sans", sans-serif; }
```
